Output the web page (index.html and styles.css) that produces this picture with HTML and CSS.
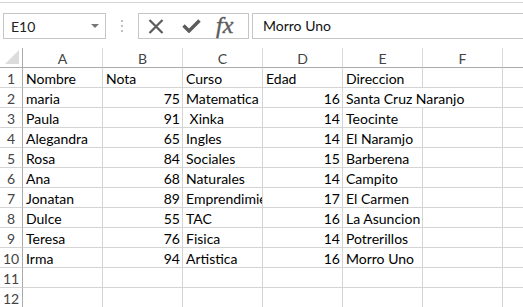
FILE: index.html
```html
<!DOCTYPE html>
<html>
<head>
<meta charset="utf-8">
<title>Libro1 - Excel</title>
<link rel="stylesheet" href="styles.css">
</head>
<body>

<div class="toolbar">
	<div class="namebox">
		<span>E10</span>
		<span class="arrow"></span>
	</div>
	<div class="grip"><i></i><i></i><i></i></div>
	<div class="fbuttons">
		<svg class="icon" width="16" height="15" viewBox="0 0 16 15">
			<path d="M1.5 1 L14.5 14 M14.5 1 L1.5 14" stroke="#5c5c5c" stroke-width="2.2" fill="none"/>
		</svg>
		<svg class="icon" width="19" height="14" viewBox="0 0 19 14">
			<path d="M1.5 6.5 L7 12 L17.5 1.5" stroke="#5c5c5c" stroke-width="3.4" fill="none"/>
		</svg>
		<span class="fx">fx</span>
	</div>
	<div class="formula">Morro Uno</div>
</div>

<div class="sheet">
	<div class="corner"><span class="tri"></span></div>
	<div class="colhead">A</div>
	<div class="colhead">B</div>
	<div class="colhead">C</div>
	<div class="colhead">D</div>
	<div class="colhead">E</div>
	<div class="colhead">F</div>
	<div class="colhead last"></div>

	<div class="rowhead">1</div>
	<div class="cell">Nombre</div>
	<div class="cell">Nota</div>
	<div class="cell">Curso</div>
	<div class="cell">Edad</div>
	<div class="cell">Direccion</div>
	<div class="cell"></div>
	<div class="cell"></div>

	<div class="rowhead">2</div>
	<div class="cell">maria</div>
	<div class="cell num">75</div>
	<div class="cell">Matematica</div>
	<div class="cell num">16</div>
	<div class="cell spill">Santa Cruz Naranjo</div>
	<div class="cell"></div>
	<div class="cell"></div>

	<div class="rowhead">3</div>
	<div class="cell">Paula</div>
	<div class="cell num">91</div>
	<div class="cell">&nbsp;Xinka</div>
	<div class="cell num">14</div>
	<div class="cell">Teocinte</div>
	<div class="cell"></div>
	<div class="cell"></div>

	<div class="rowhead">4</div>
	<div class="cell">Alegandra</div>
	<div class="cell num">65</div>
	<div class="cell">Ingles</div>
	<div class="cell num">14</div>
	<div class="cell">El Naramjo</div>
	<div class="cell"></div>
	<div class="cell"></div>

	<div class="rowhead">5</div>
	<div class="cell">Rosa</div>
	<div class="cell num">84</div>
	<div class="cell">Sociales</div>
	<div class="cell num">15</div>
	<div class="cell">Barberena</div>
	<div class="cell"></div>
	<div class="cell"></div>

	<div class="rowhead">6</div>
	<div class="cell">Ana</div>
	<div class="cell num">68</div>
	<div class="cell">Naturales</div>
	<div class="cell num">14</div>
	<div class="cell">Campito</div>
	<div class="cell"></div>
	<div class="cell"></div>

	<div class="rowhead">7</div>
	<div class="cell">Jonatan</div>
	<div class="cell num">89</div>
	<div class="cell">Emprendimiento</div>
	<div class="cell num">17</div>
	<div class="cell">El Carmen</div>
	<div class="cell"></div>
	<div class="cell"></div>

	<div class="rowhead">8</div>
	<div class="cell">Dulce</div>
	<div class="cell num">55</div>
	<div class="cell">TAC</div>
	<div class="cell num">16</div>
	<div class="cell">La Asuncion</div>
	<div class="cell"></div>
	<div class="cell"></div>

	<div class="rowhead">9</div>
	<div class="cell">Teresa</div>
	<div class="cell num">76</div>
	<div class="cell">Fisica</div>
	<div class="cell num">14</div>
	<div class="cell">Potrerillos</div>
	<div class="cell"></div>
	<div class="cell"></div>

	<div class="rowhead">10</div>
	<div class="cell">Irma</div>
	<div class="cell num">94</div>
	<div class="cell">Artistica</div>
	<div class="cell num">16</div>
	<div class="cell">Morro Uno</div>
	<div class="cell"></div>
	<div class="cell"></div>

	<div class="rowhead">11</div>
	<div class="cell"></div>
	<div class="cell"></div>
	<div class="cell"></div>
	<div class="cell"></div>
	<div class="cell"></div>
	<div class="cell"></div>
	<div class="cell"></div>

	<div class="rowhead">12</div>
	<div class="cell"></div>
	<div class="cell"></div>
	<div class="cell"></div>
	<div class="cell"></div>
	<div class="cell"></div>
	<div class="cell"></div>
	<div class="cell"></div>
</div>

</body>
</html>
```

FILE: styles.css
```css
body {
	margin: 0;
	background: #fff;
	font-family: Lato, "Open Sans", sans-serif;
	overflow: hidden;
}

/* formula bar */
.toolbar {
	margin-top: 2px;
	border-top: 1px solid #d4d4d4;
	height: 45px;
	display: flex;
	align-items: flex-start;
	padding: 10px 0 0 3px;
	box-sizing: border-box;
}
.namebox {
	width: 103px;
	height: 26px;
	box-sizing: border-box;
	border: 1px solid #c6c6c6;
	display: flex;
	align-items: center;
	justify-content: space-between;
	padding: 0 6px 0 7px;
	font-size: 14px;
	color: #222;
}
.arrow {
	width: 0;
	height: 0;
	border-left: 4px solid transparent;
	border-right: 4px solid transparent;
	border-top: 4px solid #777;
}
.grip {
	width: 32px;
	height: 26px;
	display: flex;
	flex-direction: column;
	align-items: center;
	justify-content: center;
	gap: 3px;
}
.grip i {
	width: 2px;
	height: 2px;
	background: #c0c0c0;
}
.fbuttons {
	width: 111px;
	height: 26px;
	box-sizing: border-box;
	border: 1px solid #c6c6c6;
	display: flex;
	align-items: center;
	padding-left: 9px;
}
.fbuttons .icon {
	margin-right: 18px;
}
.fbuttons .icon + .icon {
	margin-right: 15px;
}
.fx {
	font-family: "Liberation Serif", serif;
	font-style: italic;
	font-size: 24px;
	color: #5c5c5c;
	-webkit-text-stroke: 0.4px #5c5c5c;
	line-height: 1;
	margin-top: -3px;
}
.formula {
	flex: 1;
	margin-left: 3px;
	height: 26px;
	box-sizing: border-box;
	border: 1px solid #c6c6c6;
	border-right: none;
	padding-left: 10px;
	font-size: 14px;
	line-height: 24px;
	color: #111;
}

/* grid */
.sheet {
	display: grid;
	grid-template-columns: 23px repeat(6, 80px) 80px;
	grid-auto-rows: 20px;
	margin-top: 1px;
}
.corner {
	position: relative;
	border-right: 1px solid #ababab;
	border-bottom: 1px solid #ababab;
}
.tri {
	position: absolute;
	right: 3px;
	bottom: 3px;
	width: 0;
	height: 0;
	border-left: 14px solid transparent;
	border-bottom: 14px solid #dcdcdc;
}
.colhead {
	border-right: 1px solid #dadada;
	border-bottom: 1px solid #ababab;
	text-align: center;
	font-size: 14px;
	line-height: 21px;
	color: #444;
}
.rowhead {
	border-right: 1px solid #ababab;
	border-bottom: 1px solid #d4d4d4;
	text-align: center;
	font-size: 14px;
	line-height: 21px;
	color: #444;
}
.cell {
	border-right: 1px solid #d4d4d4;
	border-bottom: 1px solid #d4d4d4;
	padding: 0 2px 0 3px;
	font-size: 14px;
	line-height: 21px;
	white-space: pre;
	overflow: hidden;
	color: #000;
}
.num {
	text-align: right;
}
.spill {
	overflow: visible;
	border-right-color: transparent;
	position: relative;
	z-index: 1;
}
```
